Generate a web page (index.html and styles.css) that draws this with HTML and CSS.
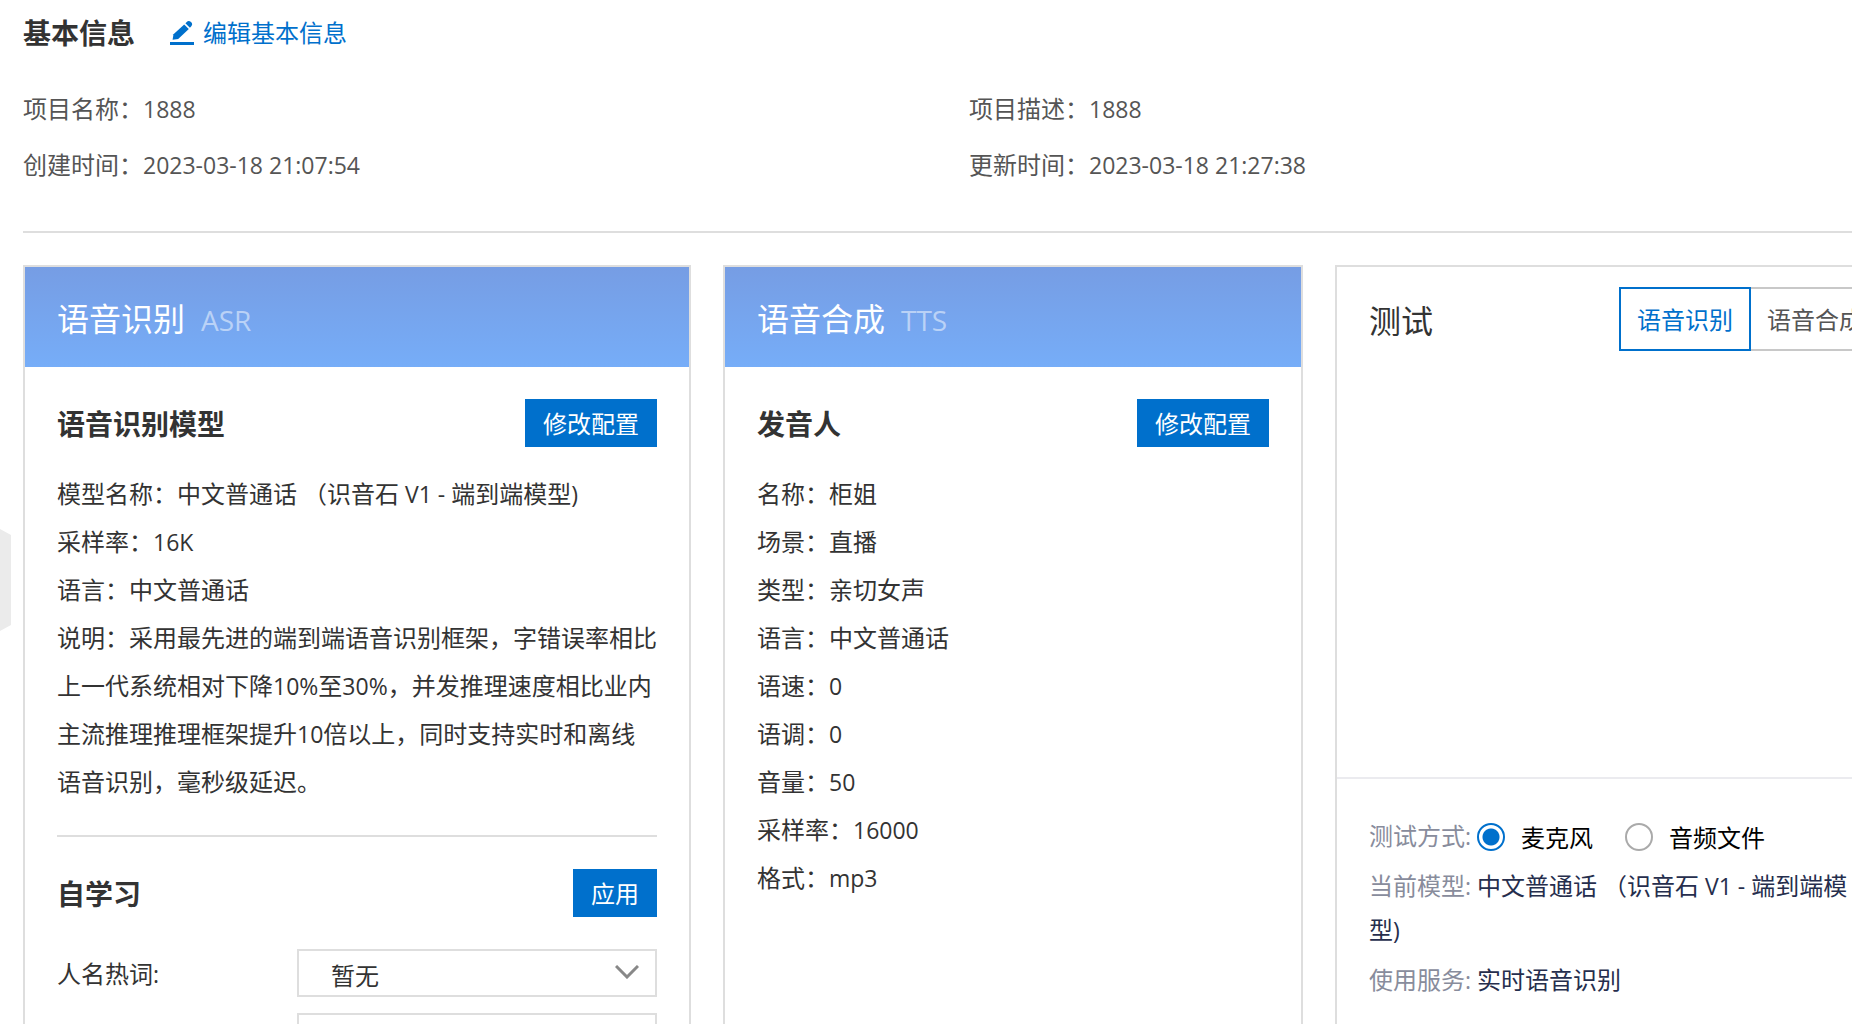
FILE: index.html
```html
<!DOCTYPE html>
<html lang="zh-CN">
<head>
<meta charset="utf-8">
<title>基本信息</title>
<link rel="stylesheet" href="styles.css">
</head>
<body>
<button class="drawer-handle" type="button" aria-label="展开侧栏"></button>
<main class="page">
  <header class="page-head">
    <h1 class="section-title">基本信息</h1>
    <a class="edit-link" href="#">
      <svg class="edit-icon" viewBox="0 0 26 26" aria-hidden="true">
        <path d="M1 23h24v3H1z"/>
        <path d="M3.6 20.8l.9-5.6L15.2 5.4l4.6 4.6L9.2 20z"/>
        <path d="M16.4 4.3l1.1-1.1a3.1 3.1 0 0 1 4.6 4.4l-1.2 1.2z"/>
      </svg>
      编辑基本信息
    </a>
  </header>

  <dl class="info">
    <div class="pair"><dt>项目名称：</dt><dd><span class="latin">1888</span></dd></div>
    <div class="pair"><dt>项目描述：</dt><dd><span class="latin">1888</span></dd></div>
    <div class="pair"><dt>创建时间：</dt><dd><span class="latin">2023-03-18 21:07:54</span></dd></div>
    <div class="pair"><dt>更新时间：</dt><dd><span class="latin">2023-03-18 21:27:38</span></dd></div>
  </dl>

  <div class="cards">
    <section class="card">
      <header class="banner">
        <h2 class="banner-title">语音识别</h2>
        <span class="banner-tag">ASR</span>
      </header>
      <div class="block">
        <div class="block-head">
          <h3 class="section-title">语音识别模型</h3>
          <button class="primary" type="button">修改配置</button>
        </div>
        <div class="details">
          <p>模型名称：中文普通话<span class="latin"> </span>（识音石<span class="latin"> V1 - </span>端到端模型<span class="latin">)</span></p>
          <p>采样率：<span class="latin">16K</span></p>
          <p>语言：中文普通话</p>
          <p>说明：采用最先进的端到端语音识别框架，字错误率相比上一代系统相对下降<span class="latin">10%</span>至<span class="latin">30%</span>，并发推理速度相比业内主流推理推理框架提升<span class="latin">10</span>倍以上，同时支持实时和离线语音识别，毫秒级延迟。</p>
        </div>
      </div>
      <div class="block block-ruled">
        <div class="block-head">
          <h3 class="section-title">自学习</h3>
          <button class="primary" type="button">应用</button>
        </div>
        <div class="fields">
          <div class="field">
            <label for="name-words">人名热词<span class="latin">:</span></label>
            <span class="picker">
              <select id="name-words"><option>暂无</option></select>
              <svg class="chevron" viewBox="0 0 24 14" aria-hidden="true"><path d="M1 1l11 11L23 1"/></svg>
            </span>
          </div>
          <div class="field">
            <span class="picker">
              <select aria-label="热词"><option></option></select>
            </span>
          </div>
        </div>
      </div>
    </section>

    <section class="card">
      <header class="banner">
        <h2 class="banner-title">语音合成</h2>
        <span class="banner-tag">TTS</span>
      </header>
      <div class="block">
        <div class="block-head">
          <h3 class="section-title">发音人</h3>
          <button class="primary" type="button">修改配置</button>
        </div>
        <div class="details">
          <p>名称：柜姐</p>
          <p>场景：直播</p>
          <p>类型：亲切女声</p>
          <p>语言：中文普通话</p>
          <p>语速：<span class="latin">0</span></p>
          <p>语调：<span class="latin">0</span></p>
          <p>音量：<span class="latin">50</span></p>
          <p>采样率：<span class="latin">16000</span></p>
          <p>格式：<span class="latin">mp3</span></p>
        </div>
      </div>
    </section>

    <section class="card">
      <header class="test-head">
        <h2 class="test-title">测试</h2>
        <div class="tabs">
          <button class="tab tab-active" type="button">语音识别</button>
          <button class="tab" type="button">语音合成</button>
        </div>
      </header>
      <div class="transcript"></div>
      <div class="test-settings">
        <fieldset class="modes">
          <legend class="key">测试方式<span class="latin">: </span></legend>
          <label class="mode"><input type="radio" name="mode" checked>麦克风</label>
          <label class="mode"><input type="radio" name="mode">音频文件</label>
        </fieldset>
        <p><span class="key">当前模型<span class="latin">: </span></span>中文普通话<span class="latin"> </span>（识音石<span class="latin"> V1 - </span>端到端模型<span class="latin">)</span></p>
        <p><span class="key">使用服务<span class="latin">: </span></span>实时语音识别</p>
      </div>
    </section>
  </div>
</main>
</body>
</html>
```

FILE: styles.css
```css
:root {
  --blue: #0070cc;
  --line: #dedede;
  --cjk: "Noto Sans CJK SC", sans-serif;
  --latin: "Open Sans", "Noto Sans CJK SC", sans-serif;
}

* {
  box-sizing: border-box;
  margin: 0;
  padding: 0;
}

html {
  scrollbar-width: none;
}

body {
  background: #fff;
  color: #333;
  font: 24px/48px var(--cjk);
}

button,
select {
  border-radius: 0;
  color: inherit;
  font: inherit;
}

.latin {
  font-family: var(--latin);
  font-size: 23px;
  line-height: 1;
  white-space: pre-wrap;
}

.page {
  min-width: 1915px;
  padding: 8px 0 32px 23px;
}

.page-head {
  display: flex;
  align-items: center;
  gap: 34px;
}

.section-title {
  font-size: 28px;
  font-weight: 700;
}

.edit-link {
  display: flex;
  align-items: center;
  gap: 8px;
  color: var(--blue);
  text-decoration: none;
}

.edit-icon {
  width: 26px;
  height: 26px;
  fill: currentColor;
}

.info {
  display: grid;
  grid-template-columns: 1fr 1fr;
  row-gap: 8px;
  padding: 28px 0 43px;
  border-bottom: 2px solid var(--line);
  color: #555;
}

.pair {
  display: flex;
}

.cards {
  display: grid;
  grid-template-columns: minmax(668px, 668fr) minmax(580px, 580fr) minmax(580px, 580fr);
  gap: 32px;
  padding-top: 32px;
}

.card {
  border: 2px solid var(--line);
}

.banner {
  display: flex;
  align-items: baseline;
  gap: 16px;
  padding: 26px 32px;
  background: linear-gradient(#769de4, #76adf8);
  color: #fff;
}

.banner-title,
.test-title {
  font-size: 32px;
  font-weight: 400;
}

.banner-tag {
  color: rgba(255, 255, 255, 0.5);
  font-family: var(--latin);
  font-size: 28px;
  line-height: 40px;
}

.block {
  margin: 0 32px;
  padding: 32px 0 30px;
}

.block-ruled {
  border-top: 2px solid var(--line);
}

.block-head {
  display: flex;
  align-items: center;
  justify-content: space-between;
}

.primary {
  height: 48px;
  padding: 0 18px;
  border: 0;
  background: var(--blue);
  color: #fff;
}

.details {
  padding-top: 22px;
}

.fields {
  display: grid;
  gap: 16px;
  padding-top: 32px;
}

.field {
  display: flex;
  justify-content: flex-end;
}

.field label {
  flex: 1;
}

.picker {
  position: relative;
  width: 60%;
  height: 48px;
}

.picker select {
  display: block;
  width: 100%;
  height: 48px;
  padding: 0 32px;
  border: 2px solid var(--line);
  background: #fff;
  appearance: none;
}

.chevron {
  position: absolute;
  top: 16px;
  right: 18px;
  width: 24px;
  height: 14px;
  fill: none;
  stroke: #888;
  stroke-width: 3;
  pointer-events: none;
}

.test-head {
  display: flex;
  align-items: center;
  justify-content: space-between;
  padding: 20px 32px 0;
}

.tabs {
  display: flex;
}

.tab {
  height: 64px;
  padding: 0 16px;
  border: 2px solid #c8c8c8;
  border-left: 0;
  background: #fff;
  color: #555;
}

.tab-active {
  border: 2px solid var(--blue);
  color: var(--blue);
}

.transcript {
  height: 426px;
}

.test-settings {
  display: grid;
  gap: 6px;
  padding: 34px 40px 34px 32px;
  border-top: 2px solid #ebebef;
  color: #262e4d;
  line-height: 44px;
}

.key {
  color: #888c9c;
}

.modes {
  display: flex;
  height: 44px;
  border: 0;
}

.modes legend {
  float: left;
}

.mode {
  display: flex;
  align-items: center;
  gap: 16px;
  height: 48px;
  margin-right: 32px;
  color: #000;
}

.mode input {
  width: 28px;
  height: 28px;
  border: 2px solid #aaa;
  border-radius: 50%;
  appearance: none;
}

.mode input:checked {
  border-color: var(--blue);
  background: radial-gradient(circle, var(--blue) 8px, transparent 9px);
}

.drawer-handle {
  position: absolute;
  top: 529px;
  left: 0;
  width: 11px;
  height: 102px;
  border: 0;
  background: #ebebeb;
  clip-path: polygon(0 0, 100% 6px, 100% 96px, 0 100%);
}
```
